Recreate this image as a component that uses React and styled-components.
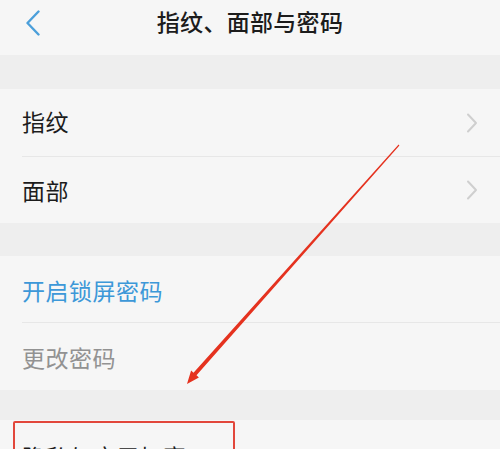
import React from "react";
import styled, { createGlobalStyle } from "styled-components";

const Global = createGlobalStyle`
  html, body { margin: 0; padding: 0; background: #f6f6f6; }
  body { font-family: "Noto Sans CJK SC", "Noto Sans", sans-serif; }
`;

const Page = styled.div`
  position: relative;
  width: 500px;
  height: 449px;
  overflow: hidden;
  background: #f6f6f6;
`;

const Header = styled.header`
  position: relative;
  height: 55px;
  display: flex;
  align-items: center;
  justify-content: center;
  background: #f6f6f6;
`;

const BackButton = styled.div`
  position: absolute;
  left: 25px;
  top: 10px;
  width: 16px;
  height: 26px;
  display: flex;
`;

const Title = styled.h1`
  margin: 0;
  font-size: 23px;
  font-weight: 500;
  color: #1c1c1c;
  letter-spacing: 0.3px;
  transform: translateY(-7px);
`;

const Gap = styled.div`
  height: ${(p) => p.h}px;
  background: #eeeeee;
`;

const Group = styled.div`
  background: #f6f6f6;
  display: flex;
  flex-direction: column;
`;

const Row = styled.div`
  height: ${(p) => p.h}px;
  display: flex;
  align-items: center;
  justify-content: space-between;
  padding: 0 22px 0 22px;
  font-size: 23px;
  color: ${(p) => p.color || "#1c1c1c"};
`;

const Label = styled.span`
  letter-spacing: 0.5px;
  transform: translateY(${(p) => p.dy || 0}px);
`;

const Divider = styled.div`
  height: 1px;
  margin-left: 22px;
  background: #e7e7e7;
`;

const Overlay = styled.svg`
  position: absolute;
  left: 0;
  top: 0;
  pointer-events: none;
`;

const Highlight = styled.div`
  position: absolute;
  left: 13px;
  top: 421px;
  width: 218px;
  height: 60px;
  border: 2px solid #e2473b;
  border-radius: 2px;
`;

const Chevron = () => (
  <svg width="12" height="20" viewBox="0 0 12 20">
    <path d="M2 1.5 L10 10 L2 18.5" fill="none" stroke="#cfcfcf" strokeWidth="2" strokeLinecap="round" strokeLinejoin="round" />
  </svg>
);

export default function App() {
  return (
    <Page>
      <Global />
      <Header>
        <BackButton>
          <svg width="16" height="26" viewBox="0 0 16 26">
            <path d="M13.5 1.5 L2.5 13 L13.5 24.5" fill="none" stroke="#4b9fda" strokeWidth="2.4" strokeLinecap="round" strokeLinejoin="round" />
          </svg>
        </BackButton>
        <Title>指纹、面部与密码</Title>
      </Header>
      <Gap h={34} />
      <Group>
        <Row h={67}>
          <Label dy={-2}>指纹</Label>
          <Chevron />
        </Row>
        <Divider />
        <Row h={66}>
          <Label dy={0}>面部</Label>
          <Chevron />
        </Row>
      </Group>
      <Gap h={33} />
      <Group>
        <Row h={66} color="#3d98d8">
          <Label dy={1}>开启锁屏密码</Label>
        </Row>
        <Divider />
        <Row h={67} color="#929292">
          <Label dy={0}>更改密码</Label>
        </Row>
      </Group>
      <Gap h={30} />
      <Group>
        <Row h={67}>
          <Label dy={2}>隐私与应用加密</Label>
        </Row>
      </Group>
      <Highlight />
      <Overlay width="500" height="449" viewBox="0 0 500 449">
        <polygon
          points="399.4,145.4 196.5,375.3 198.9,377.6 187,384 191.1,370.4 193.5,372.7 398.6,144.6"
          fill="#e5321f"
        />
      </Overlay>
    </Page>
  );
}
